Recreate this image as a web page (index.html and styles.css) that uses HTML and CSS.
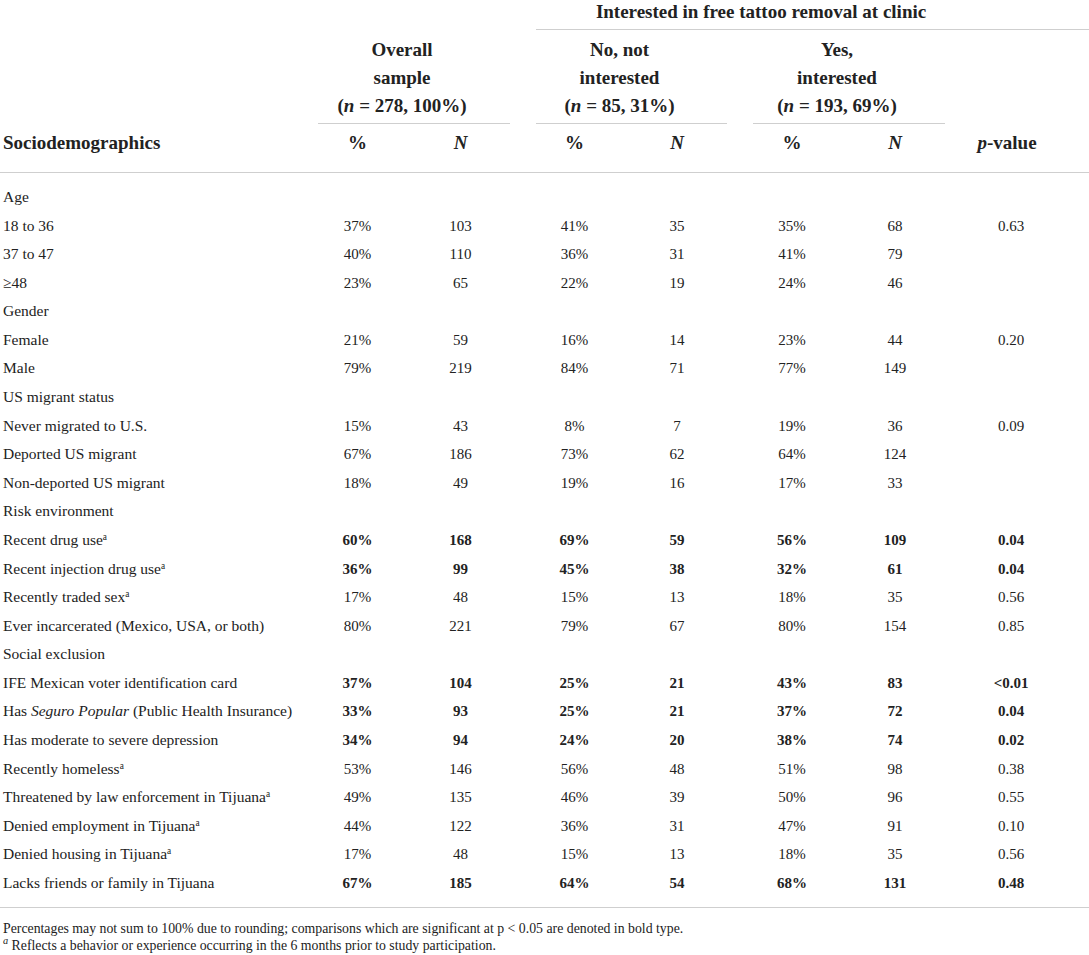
FILE: index.html
```html
<!DOCTYPE html>
<html lang="en">

<head>
    <meta charset="UTF-8">
    <meta name="viewport" content="width=device-width, initial-scale=1.0">
    <title>Tattoo removal interest by sociodemographics</title>
    <link rel="stylesheet" href="styles.css">
</head>

<body>
    <table class="data-table">
        <colgroup>
            <col class="col-label">
            <col class="col-a">
            <col class="col-b">
            <col class="col-c">
            <col class="col-d">
            <col class="col-e">
            <col class="col-f">
            <col class="col-p">
        </colgroup>
        <thead>
            <tr class="row-top">
                <th colspan="3"></th>
                <th colspan="5" class="span-cell top-span">
                    <div class="top-line">Interested in free tattoo removal at clinic</div>
                </th>
            </tr>
            <tr class="row-groups">
                <th></th>
                <th colspan="2" class="span-cell">
                    <div class="group-line">Overall<br>sample<br>(<i>n</i> = 278, 100%)</div>
                </th>
                <th colspan="2" class="span-cell">
                    <div class="group-line">No, not<br>interested<br>(<i>n</i> = 85, 31%)</div>
                </th>
                <th colspan="2" class="span-cell">
                    <div class="group-line">Yes,<br>interested<br>(<i>n</i> = 193, 69%)</div>
                </th>
                <th></th>
            </tr>
            <tr class="row-cols">
                <th class="label">Sociodemographics</th>
                <th>%</th>
                <th class="n"><i>N</i></th>
                <th>%</th>
                <th class="n"><i>N</i></th>
                <th>%</th>
                <th class="n"><i>N</i></th>
                <th class="p"><i>p</i>-value</th>
            </tr>
        </thead>
        <tbody>
            <!-- Age -->
            <tr class="first"><td class="label">Age</td><td></td><td class="n"></td><td></td><td class="n"></td><td></td><td class="n"></td><td class="p"></td></tr>
            <tr><td class="label">18 to 36</td><td>37%</td><td class="n">103</td><td>41%</td><td class="n">35</td><td>35%</td><td class="n">68</td><td class="p">0.63</td></tr>
            <tr><td class="label">37 to 47</td><td>40%</td><td class="n">110</td><td>36%</td><td class="n">31</td><td>41%</td><td class="n">79</td><td class="p"></td></tr>
            <tr><td class="label">&ge;48</td><td>23%</td><td class="n">65</td><td>22%</td><td class="n">19</td><td>24%</td><td class="n">46</td><td class="p"></td></tr>

            <!-- Gender -->
            <tr><td class="label">Gender</td><td></td><td class="n"></td><td></td><td class="n"></td><td></td><td class="n"></td><td class="p"></td></tr>
            <tr><td class="label">Female</td><td>21%</td><td class="n">59</td><td>16%</td><td class="n">14</td><td>23%</td><td class="n">44</td><td class="p">0.20</td></tr>
            <tr><td class="label">Male</td><td>79%</td><td class="n">219</td><td>84%</td><td class="n">71</td><td>77%</td><td class="n">149</td><td class="p"></td></tr>

            <!-- US migrant status -->
            <tr><td class="label">US migrant status</td><td></td><td class="n"></td><td></td><td class="n"></td><td></td><td class="n"></td><td class="p"></td></tr>
            <tr><td class="label">Never migrated to U.S.</td><td>15%</td><td class="n">43</td><td>8%</td><td class="n">7</td><td>19%</td><td class="n">36</td><td class="p">0.09</td></tr>
            <tr><td class="label">Deported US migrant</td><td>67%</td><td class="n">186</td><td>73%</td><td class="n">62</td><td>64%</td><td class="n">124</td><td class="p"></td></tr>
            <tr><td class="label">Non-deported US migrant</td><td>18%</td><td class="n">49</td><td>19%</td><td class="n">16</td><td>17%</td><td class="n">33</td><td class="p"></td></tr>

            <!-- Risk environment -->
            <tr><td class="label">Risk environment</td><td></td><td class="n"></td><td></td><td class="n"></td><td></td><td class="n"></td><td class="p"></td></tr>
            <tr class="sig"><td class="label">Recent drug use<sup>a</sup></td><td>60%</td><td class="n">168</td><td>69%</td><td class="n">59</td><td>56%</td><td class="n">109</td><td class="p">0.04</td></tr>
            <tr class="sig"><td class="label">Recent injection drug use<sup>a</sup></td><td>36%</td><td class="n">99</td><td>45%</td><td class="n">38</td><td>32%</td><td class="n">61</td><td class="p">0.04</td></tr>
            <tr><td class="label">Recently traded sex<sup>a</sup></td><td>17%</td><td class="n">48</td><td>15%</td><td class="n">13</td><td>18%</td><td class="n">35</td><td class="p">0.56</td></tr>
            <tr><td class="label">Ever incarcerated (Mexico, USA, or both)</td><td>80%</td><td class="n">221</td><td>79%</td><td class="n">67</td><td>80%</td><td class="n">154</td><td class="p">0.85</td></tr>

            <!-- Social exclusion -->
            <tr><td class="label">Social exclusion</td><td></td><td class="n"></td><td></td><td class="n"></td><td></td><td class="n"></td><td class="p"></td></tr>
            <tr class="sig"><td class="label">IFE Mexican voter identification card</td><td>37%</td><td class="n">104</td><td>25%</td><td class="n">21</td><td>43%</td><td class="n">83</td><td class="p">&lt;0.01</td></tr>
            <tr class="sig"><td class="label">Has <i>Seguro Popular</i> (Public Health Insurance)</td><td>33%</td><td class="n">93</td><td>25%</td><td class="n">21</td><td>37%</td><td class="n">72</td><td class="p">0.04</td></tr>
            <tr class="sig"><td class="label">Has moderate to severe depression</td><td>34%</td><td class="n">94</td><td>24%</td><td class="n">20</td><td>38%</td><td class="n">74</td><td class="p">0.02</td></tr>
            <tr><td class="label">Recently homeless<sup>a</sup></td><td>53%</td><td class="n">146</td><td>56%</td><td class="n">48</td><td>51%</td><td class="n">98</td><td class="p">0.38</td></tr>
            <tr><td class="label">Threatened by law enforcement in Tijuana<sup>a</sup></td><td>49%</td><td class="n">135</td><td>46%</td><td class="n">39</td><td>50%</td><td class="n">96</td><td class="p">0.55</td></tr>
            <tr><td class="label">Denied employment in Tijuana<sup>a</sup></td><td>44%</td><td class="n">122</td><td>36%</td><td class="n">31</td><td>47%</td><td class="n">91</td><td class="p">0.10</td></tr>
            <tr><td class="label">Denied housing in Tijuana<sup>a</sup></td><td>17%</td><td class="n">48</td><td>15%</td><td class="n">13</td><td>18%</td><td class="n">35</td><td class="p">0.56</td></tr>
            <tr class="sig last"><td class="label">Lacks friends or family in Tijuana</td><td>67%</td><td class="n">185</td><td>64%</td><td class="n">54</td><td>68%</td><td class="n">131</td><td class="p">0.48</td></tr>
        </tbody>
    </table>

    <!-- Table notes -->
    <div class="notes">
        <p>Percentages may not sum to 100% due to rounding; comparisons which are significant at p &lt; 0.05 are denoted in bold type.</p>
        <p><sup class="note-mark"><i>a</i></sup> Reflects a behavior or experience occurring in the 6 months prior to study participation.</p>
    </div>
</body>

</html>
```

FILE: styles.css
```css
body {
    margin: 0;
    padding: 0;
    background-color: #fff;
    color: #222;
    font-family: 'Liberation Serif', 'Times New Roman', serif;
}

/* Table */
.data-table {
    width: 1089px;
    table-layout: fixed;
    border-collapse: collapse;
}

.col-label { width: 305px; }
.col-a { width: 105px; }
.col-b { width: 113px; }
.col-c { width: 103px; }
.col-d { width: 114px; }
.col-e { width: 104px; }
.col-f { width: 114px; }
.col-p { width: 131px; }

th {
    font-size: 19px;
    font-weight: bold;
    padding: 0;
    text-align: center;
    vertical-align: top;
}

.span-cell {
    padding: 0 13px;
}

.top-span {
    padding: 0 0 0 13px;
}

.top-line {
    line-height: 24px;
    padding: 0 103px 5px 0;
    border-bottom: 1px solid #cfcfcf;
}

.group-line {
    line-height: 28px;
    padding: 6px 24px 3px 0;
    border-bottom: 1px solid #cfcfcf;
}

.row-cols th {
    line-height: 24px;
    padding: 7px 0 17px;
    border-bottom: 1px solid #cfcfcf;
}

.row-cols th.label {
    text-align: left;
    padding-left: 3px;
}

.row-cols th.n {
    padding-right: 12px;
}

.row-cols th.p {
    padding-right: 33px;
}

td {
    padding: 0;
    font-size: 15px;
    line-height: 28.58px;
    text-align: center;
    white-space: nowrap;
}

td.label {
    text-align: left;
    padding-left: 3px;
    font-size: 15.5px;
}

td.n {
    padding-right: 12px;
}

td.p {
    padding-right: 25px;
}

tr.first td {
    padding-top: 10px;
}

tr.last td {
    padding-bottom: 9.5px;
    border-bottom: 1px solid #cfcfcf;
}

tr.sig td {
    font-weight: bold;
}

tr.sig td.label {
    font-weight: normal;
}

sup {
    font-size: 0.6em;
    line-height: 0;
    vertical-align: 0.55em;
}

/* Notes */
.notes {
    padding: 12.5px 0 0 3px;
    font-size: 13.8px;
    line-height: 17px;
}

.notes p {
    margin: 0;
}

.note-mark {
    font-size: 0.75em;
}
```
